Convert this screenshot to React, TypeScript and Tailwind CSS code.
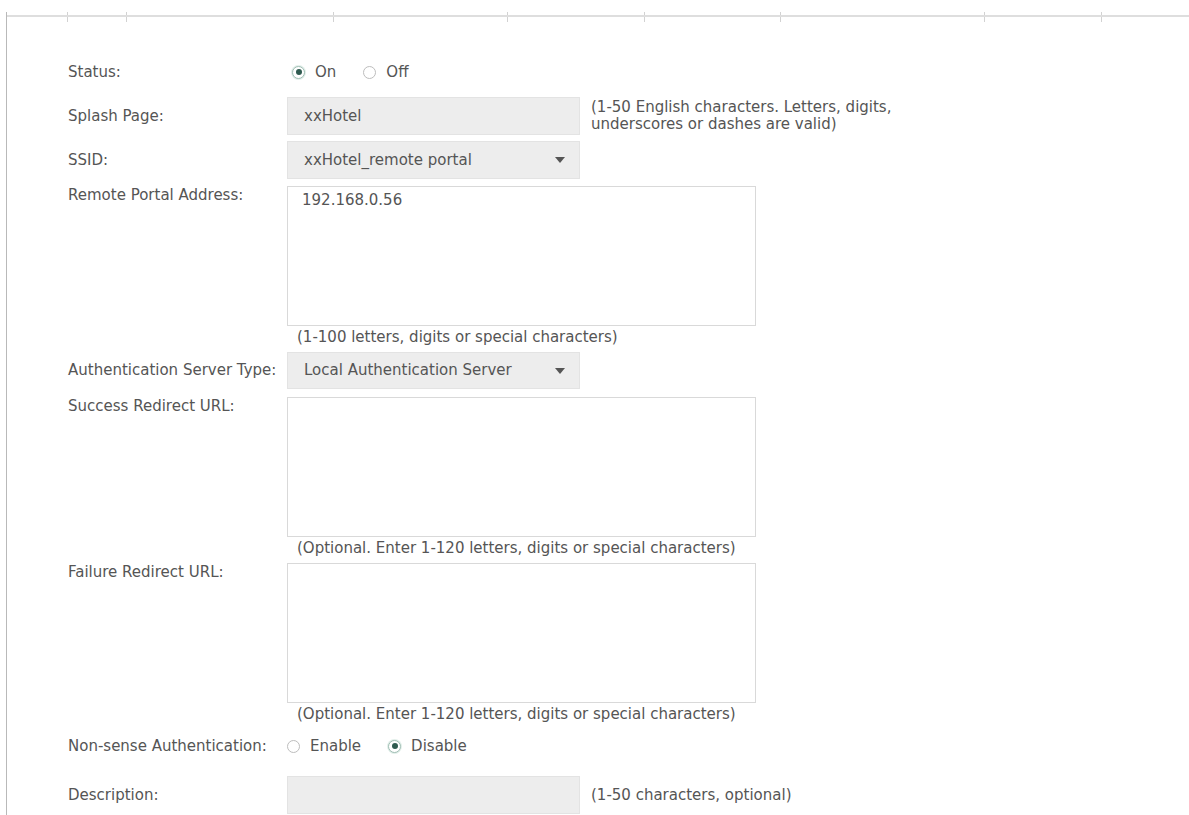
import React from "react";

const TICKS = [61, 59, 207, 174, 137, 136, 204, 117];

function Radio({ checked, label, gap = "mr-[27px]" }: { checked?: boolean; label: string; gap?: string }) {
  return (
    <label className={`flex items-center ${gap}`}>
      <span
        className={
          checked
            ? "flex h-[13px] w-[13px] items-center justify-center rounded-full border border-[#9fbdb3] bg-white shadow-[0_0_0_1px_#e2efea]"
            : "flex h-[13px] w-[13px] items-center justify-center rounded-full border border-[#bdbdbd] bg-white"
        }
      >
        {checked && <span className="h-[6px] w-[6px] rounded-full bg-[#2f5b50]" />}
      </span>
      <span className="ml-[10px]">{label}</span>
    </label>
  );
}

function Arrow() {
  return (
    <svg width="10" height="6" viewBox="0 0 10 6" className="ml-auto mr-[14px]">
      <path d="M0 0 L10 0 L5 6 Z" fill="#555" />
    </svg>
  );
}

function TextBox({ value, select }: { value?: string; select?: boolean }) {
  return (
    <div className="flex h-[38px] w-[293px] items-center border border-[#e3e3e3] bg-[#ededed] pl-[16px]">
      <span>{value}</span>
      {select && <Arrow />}
    </div>
  );
}

function Area({ value, hint }: { value?: string; hint: string }) {
  return (
    <div className="flex flex-col">
      <div className="h-[140px] w-[469px] border border-[#d9d9d9] bg-white px-[14px] pt-[4px] leading-[18px]">
        {value}
      </div>
      <div className="pl-[10px] leading-[22px]">{hint}</div>
    </div>
  );
}

function Row({ label, top, children, className = "" }: { label: string; top?: boolean; children: React.ReactNode; className?: string }) {
  return (
    <div className={`flex ${top ? "items-start" : "items-center"} ${className}`}>
      <div className={`w-[219px] shrink-0 ${top ? "leading-[18px]" : ""}`}>{label}</div>
      {children}
    </div>
  );
}

export default function App() {
  return (
    <div className="min-h-screen overflow-hidden bg-white pt-[12px] font-['DejaVu_Sans',sans-serif] text-[15px] text-[#555]">
      <div className="ml-[6px] min-h-[803px] border-l border-[#b9b9b9]">
        <div className="relative flex h-[10px]">
          <div className="absolute left-0 right-0 top-[3px] h-[2px] bg-[#dedede]" />
          {TICKS.map((w, i) => (
            <div key={i} className="h-full shrink-0 border-r border-[#d2d2d2]" style={{ width: w }} />
          ))}
          <div className="flex-1" />
        </div>

        <div className="flex flex-col pl-[61px] pb-[10px]">
          <Row label="Status:" className="mt-[36px] h-[28px]">
            <div className="flex items-center pl-[5px]">
              <Radio checked label="On" />
              <Radio label="Off" />
            </div>
          </Row>

          <Row label="Splash Page:" className="mt-[11px]">
            <TextBox value="xxHotel" />
            <div className="ml-[11px] leading-[17px]">
              (1-50 English characters. Letters, digits,
              <br />
              underscores or dashes are valid)
            </div>
          </Row>

          <Row label="SSID:" className="mt-[6px]">
            <TextBox value="xxHotel_remote portal" select />
          </Row>

          <Row label="Remote Portal Address:" top className="mt-[7px]">
            <Area value="192.168.0.56" hint="(1-100 letters, digits or special characters)" />
          </Row>

          <Row label="Authentication Server Type:" className="mt-[4px]">
            <div className="flex h-[37px] w-[293px] items-center border border-[#e3e3e3] bg-[#ededed] pl-[16px]">
              <span>Local Authentication Server</span>
              <Arrow />
            </div>
          </Row>

          <Row label="Success Redirect URL:" top className="mt-[8px]">
            <Area hint="(Optional. Enter 1-120 letters, digits or special characters)" />
          </Row>

          <Row label="Failure Redirect URL:" top className="mt-[4px]">
            <div className="flex flex-col">
              <div className="h-[140px] w-[469px] border border-[#d9d9d9] bg-white" />
              <div className="pl-[10px] leading-[22px]">(Optional. Enter 1-120 letters, digits or special characters)</div>
            </div>
          </Row>

          <Row label="Non-sense Authentication:" className="mt-[9px] h-[24px]">
            <div className="flex items-center">
              <Radio label="Enable" />
              <Radio checked label="Disable" />
            </div>
          </Row>

          <Row label="Description:" className="mt-[18px]">
            <TextBox />
            <div className="ml-[11px]">(1-50 characters, optional)</div>
          </Row>
        </div>
      </div>
    </div>
  );
}
